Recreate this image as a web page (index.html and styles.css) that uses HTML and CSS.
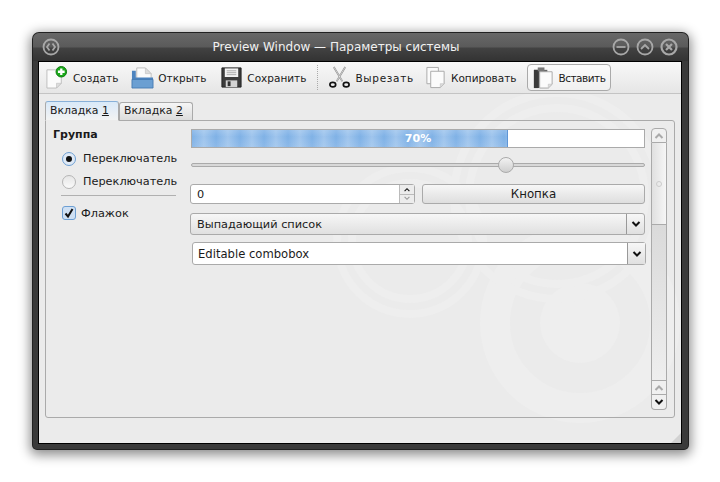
FILE: index.html
```html
<!DOCTYPE html>
<html lang="ru">
<head>
<meta charset="utf-8">
<title>Preview Window</title>
<link rel="stylesheet" href="styles.css">
</head>
<body>
<div class="window">
  <div class="titlebar">
    <svg class="wbtn" viewBox="0 0 18 18"><circle cx="9" cy="9" r="7.500"/><path d="M7.500 5.500 5 9l2.500 3.500M10.500 5.500 13 9l-2.500 3.500"/></svg>
    <div class="title">Preview Window — Параметры системы</div>
    <div class="wbtns">
      <svg class="wbtn" viewBox="0 0 18 18"><circle cx="9" cy="9" r="7.500"/><path d="M4.500 9h9"/></svg>
      <svg class="wbtn" viewBox="0 0 18 18"><circle cx="9" cy="9" r="7.500"/><path d="M5 11l4-4 4 4"/></svg>
      <svg class="wbtn thick" viewBox="0 0 18 18"><circle cx="9" cy="9" r="7.500"/><path d="M6 6l6 6M12 6l-6 6"/></svg>
    </div>
  </div>
  <div class="client">
    <svg class="swirl" viewBox="39 62 642 381">
      <circle class="solid" cx="580" cy="323" r="40"/>
      <circle class="band30" cx="580" cy="323" r="85"/>
      <circle class="band8" cx="557" cy="196" r="103"/>
      <circle class="band8" cx="557" cy="196" r="88"/>
      <circle class="band8" cx="410" cy="241" r="73"/>
      <circle class="band8" cx="410" cy="241" r="58"/>
    </svg>
    <div class="toolbar">
      <div class="tool t-new">
        <svg class="ico" viewBox="0 0 24 24"><path class="paper" d="M2 4h15v14l-5 5H2z"/><path class="fold" d="M17 18h-5v5z"/><circle cx="17" cy="6" r="5.500" fill="#1aa81a" stroke="#0b7a0b"/><path d="M17 2.500v7M13.500 6h7" stroke="#fff" stroke-width="2.400" fill="none"/></svg>
        <span>Создать</span>
      </div>
      <div class="tool t-open">
        <svg class="ico" viewBox="0 0 24 24"><path class="paper" d="M6 2h9l6 6v6H6z"/><path class="fold" d="M15 2v6h6z"/><path d="M1 5h4v7h18v11H1z" fill="#4d84bf"/><path d="M1 14h22v9H1z" fill="#6b9fd2" stroke="#3f74ad" stroke-width=".8"/></svg>
        <span>Открыть</span>
      </div>
      <div class="tool t-save">
        <svg class="ico" viewBox="0 0 24 24"><path d="M2 2h20v20H2z" fill="#3c3c3c" stroke="#222"/><path d="M5 2.500h14v9H5z" fill="#f2f2f2"/><path d="M7 5h10M7 7h10M7 9h10" stroke="#aaa" fill="none"/><path d="M6 15h12v7H6z" fill="#d4d4d4"/><path d="M8 16h3v5H8z" fill="#333"/></svg>
        <span>Сохранить</span>
      </div>
      <div class="tsep"></div>
      <div class="tool t-cut">
        <svg class="ico" viewBox="0 0 24 24"><path d="M6 1l9 15M18 1L9 16" stroke="#888" stroke-width="1.800" fill="none"/><path d="M6 1l9 15M18 1L9 16" stroke="#eee" stroke-width=".7" fill="none"/><ellipse cx="5" cy="19.500" rx="3" ry="2.300" fill="none" stroke="#111" stroke-width="1.800"/><ellipse cx="19" cy="19.500" rx="3" ry="2.300" fill="none" stroke="#111" stroke-width="1.800"/></svg>
        <span>Вырезать</span>
      </div>
      <div class="tool t-copy">
        <svg class="ico" viewBox="0 0 24 24"><path class="paper2" d="M3 1.500h12v17H3z"/><path class="paper2" d="M7 5.500h14v13l-4 4H7z"/><path class="fold" d="M21 18.500h-4v4z"/></svg>
        <span>Копировать</span>
      </div>
      <div class="tool t-paste active">
        <svg class="ico" viewBox="0 0 24 24"><path d="M2 4h14v19H2z" fill="#666"/><path d="M2 4h5v19H2z" fill="#3a3a3a"/><path d="M6 1.500h7v4H6z" fill="#777"/><path class="paper2" d="M8 6h13v13l-4 4H8z"/><path class="fold" d="M21 19h-4v4z"/></svg>
        <span>Вставить</span>
      </div>
    </div>
    <div class="tabs">
      <div class="tab on">Вкладка <u>1</u></div>
      <div class="tab">Вкладка <u>2</u></div>
    </div>
    <div class="pane">
      <div class="side">
        <div class="grouptitle">Группа</div>
        <label class="opt"><span class="radio on"></span>Переключатель</label>
        <label class="opt"><span class="radio"></span>Переключатель</label>
        <div class="hr"></div>
        <label class="chk"><span class="box"><svg viewBox="0 0 12 12"><path d="M2.500 6.500 5 9.500 9.500 2"/></svg></span>Флажок</label>
      </div>
      <div class="main">
        <div class="progress"><div class="fill" style="width:70%"></div><span class="pct">70%</span></div>
        <div class="slider"><div class="groove"></div><div class="handle"></div></div>
        <div class="row">
          <div class="spin"><span class="val">0</span><div class="arrows"><span class="ar"><svg viewBox="0 0 10 6"><path d="M2 5l3-3 3 3"/></svg></span><span class="ar dim"><svg viewBox="0 0 10 6"><path d="M2 1l3 3 3-3"/></svg></span></div></div>
          <div class="btn">Кнопка</div>
        </div>
        <div class="combo"><span class="ctext">Выпадающий список</span><span class="drop"><svg viewBox="0 0 10 6"><path d="M1.500 1 5 4.500 8.500 1"/></svg></span></div>
        <div class="edit"><span class="ctext">Editable combobox</span><span class="drop"><svg viewBox="0 0 10 6"><path d="M1.500 1 5 4.500 8.500 1"/></svg></span></div>
      </div>
      <div class="scroll">
        <div class="sb up"><svg viewBox="0 0 10 6"><path d="M1.500 5 5 1.500 8.500 5"/></svg></div>
        <div class="thumb"><i></i></div>
        <div class="track"></div>
        <div class="sb up"><svg viewBox="0 0 10 6"><path d="M1.500 5 5 1.500 8.500 5"/></svg></div>
        <div class="sb down"><svg viewBox="0 0 10 6"><path d="M1.500 1 5 4.500 8.500 1"/></svg></div>
      </div>
    </div>
    <div class="grip"></div>
  </div>
</div>
</body>
</html>
```
FILE: styles.css
```css
* { box-sizing: border-box; }
html, body { margin: 0; height: 100%; background: #fff; }
body { padding: 33px 32px 0 33px; font: 11.300px "DejaVu Sans", sans-serif; color: #1a1a1a; overflow: hidden; }
svg { display: block; }

.window { width: 655px; height: 416px; background: #3a3a3a; border-radius: 6px 6px 4px 4px; box-shadow: 0 0 0 1px #222, 0 3px 12px 3px rgba(0,0,0,.45); display: flex; flex-direction: column; padding: 0 6px 5px 5px; }
.titlebar { height: 28px; margin: 0 -6px 0 -5px; padding: 0 10px 0 9px; display: flex; align-items: flex-start; border-radius: 6px 6px 0 0; background: linear-gradient(#686868 0, #5a5a5a 14px, #424242 15px, #333 28px); }
.wbtn { width: 18px; height: 18px; margin-top: 5px; fill: none; stroke: #a8a8a8; stroke-width: 1.800; }
.thick { stroke-width: 2.200; }
.title { flex: 1; padding-top: 7px; text-align: center; color: #f1f1f1; font-size: 12px; }
.wbtns { display: flex; gap: 6px; }

.client { position: relative; flex: 1; background: #ebebeb; border: 1px solid #000; display: flex; flex-direction: column; overflow: hidden; }
.swirl { position: absolute; left: 0; top: 0; width: 642px; height: 381px; fill: none; stroke: #eeeeee; }
.solid { fill: #eeeeee; stroke: none; }
.band30 { stroke-width: 30; }
.band8 { stroke-width: 8; }

.toolbar { position: relative; height: 32px; display: flex; align-items: center; padding: 0 0 0 7px; background: linear-gradient(#f8f8f8, #e6e6e6); border-bottom: 1px solid #c4c4c4; font-size: 10.500px; }
.tool { display: flex; align-items: center; gap: 4px; height: 27px; }
.ico { width: 23px; height: 23px; flex: none; }
.paper { fill: #fbfbfb; stroke: #bdbdbd; }
.paper2 { fill: #fbfbfb; stroke: #a9a9a9; }
.fold { fill: #ddd; stroke: #bdbdbd; stroke-width: .6; }
.t-new { margin-left: -1px; gap: 5px; }
.t-open { margin-left: 13px; }
.t-save { margin-left: 14px; }
.tsep { width: 0; height: 25px; margin-left: 11px; border-left: 1px dotted #aaa; }
.t-cut { margin-left: 10px; }
.t-cut span { letter-spacing: .7px; }
.t-copy { margin-left: 10px; }
.t-paste { margin-left: 10px; }
.t-paste span { letter-spacing: -.5px; }
.active { padding: 0 5px 0 4px; background: linear-gradient(#fbfbfb, #f0f0f0); border: 1px solid #aaa; border-radius: 4px; }

.tabs { position: relative; display: flex; align-items: flex-end; height: 26px; padding-left: 6px; font-size: 10.900px; }
.tab { width: 74px; height: 18px; padding: 1px 0 0 4px; border: 1px solid #aaa; border-bottom: 0; border-radius: 3px 3px 0 0; background: linear-gradient(#f6f6f6, #dcdcdc); }
.tab.on { height: 20px; padding-top: 2px; background: linear-gradient(#d9e9f8, #f3f3f3); border-bottom: 1px solid #ebebeb; margin-bottom: -1px; z-index: 1; border-top-color: #88b0d8; }

.pane { position: relative; width: 630px; height: 298px; margin-left: 6px; border: 1px solid #aaa; border-radius: 0 3px 3px 3px; display: flex; padding: 7px; }
.side { width: 137px; flex: none; display: flex; flex-direction: column; }
.grouptitle { font-weight: bold; line-height: 14px; height: 14px; font-size: 11px; }
.opt { display: flex; align-items: center; gap: 7px; height: 23px; padding-left: 9px; }
.grouptitle + .opt { margin-top: 5px; }
.radio { width: 14px; height: 14px; border-radius: 50%; border: 1px solid #b5b5b5; background: linear-gradient(#e6e6e6, #fafafa); flex: none; display: flex; align-items: center; justify-content: center; }
.radio.on { border-color: #6d9fd3; background: #dfe9f5; }
.radio.on::after { content: ""; width: 6px; height: 6px; border-radius: 50%; background: #111; }
.hr { height: 1px; background: #b0b0b0; margin: 2px 0 0 8px; width: 115px; }
.chk { display: flex; align-items: center; gap: 5px; margin: 10px 0 0 9px; height: 14px; }
.box { width: 14px; height: 14px; flex: none; border: 1px solid #6d9fd3; border-radius: 3px; background: #cfe0f3; }
.box svg { width: 12px; height: 12px; fill: none; stroke: #111; stroke-width: 2; }

.main { width: 457px; flex: none; padding-top: 1px; display: flex; flex-direction: column; }
.progress { position: relative; width: 454px; height: 19px; margin-left: 1px; border: 1px solid #aaa; background: #fff; }
.fill { height: 100%; border-right: 1px solid #5f96d6; background: linear-gradient(rgba(255,255,255,.15), rgba(255,255,255,0) 40%, rgba(255,255,255,.1)), repeating-linear-gradient(90deg, #7fb1e6 0, #9fc5ed 12px, #7fb1e6 24px); }
.pct { position: absolute; inset: 0; text-align: center; line-height: 18px; color: #fff; font-weight: bold; font-size: 11px; }
.slider { position: relative; height: 17px; margin-top: 8px; width: 454px; margin-left: 1px; }
.groove { position: absolute; left: 0; right: 0; top: 7px; height: 4px; border: 1px solid #aaa; border-radius: 2px; background: #d8d8d8; }
.handle { position: absolute; left: 307px; top: 1px; width: 16px; height: 16px; border-radius: 50%; border: 1px solid #aaa; background: linear-gradient(#f2f2f2, #cfcfcf); }
.row { display: flex; gap: 7px; margin-top: 11px; height: 20px; }
.spin { width: 225px; display: flex; align-items: center; justify-content: space-between; padding-left: 6px; background: #fff; border: 1px solid #aaa; border-radius: 3px; }
.arrows { width: 15px; height: 100%; display: flex; flex-direction: column; background: #ececec; border-left: 1px solid #bbb; }
.ar { flex: 1; display: flex; align-items: center; justify-content: center; border-bottom: 1px solid #bbb; }
.ar svg { width: 8px; height: 5px; fill: none; stroke: #111; stroke-width: 1.400; }
.ar.dim { border-bottom: 0; }
.ar.dim svg { stroke: #999; }
.btn { width: 223px; text-align: center; line-height: 18px; border: 1px solid #aaa; border-radius: 3px; background: linear-gradient(#f7f7f7, #dedede); font-size: 11.800px; }
.combo, .edit { display: flex; align-items: center; border: 1px solid #aaa; border-radius: 3px; }
.combo { margin-top: 9px; height: 22px; width: 455px; background: linear-gradient(#f7f7f7, #e0e0e0); }
.edit { margin-top: 7px; height: 23px; width: 454px; margin-left: 2px; background: #fff; font-size: 11.600px; }
.ctext { flex: 1; padding-left: 5px; }
.combo .ctext { padding-left: 6px; }
.drop { width: 18px; height: 100%; display: flex; align-items: center; justify-content: center; border-left: 1px solid #999; }
.edit .drop { background: linear-gradient(#f7f7f7, #e0e0e0); }
.drop svg { width: 10px; height: 6px; fill: none; stroke: #111; stroke-width: 2; }

.scroll { width: 16px; flex: none; margin-left: 4px; height: 282px; display: flex; flex-direction: column; }
.sb { height: 15px; display: flex; align-items: center; justify-content: center; border: 1px solid #aaa; background: #f0f0f0; }
.sb:first-child { border-radius: 4px 4px 0 0; }
.sb:last-child { border-radius: 0 0 4px 4px; border-top: 0; }
.sb svg { width: 10px; height: 6px; fill: none; stroke: #111; stroke-width: 2; }
.sb.up svg { stroke: #aaa; }
.thumb { height: 82px; border: 1px solid #aaa; border-top: 0; background: linear-gradient(90deg, #e0e0e0, #f6f6f6); display: flex; align-items: center; justify-content: center; }
.thumb i { width: 6px; height: 6px; border: 1px solid #ccc; border-radius: 50%; }
.track { flex: 1; border: 1px solid #aaa; border-width: 0 1px; background: linear-gradient(#dadada, #eee); }
.sb + .sb { border-top: 0; }
.track + .sb { border-top: 1px solid #aaa; }

.grip { position: absolute; right: 0; bottom: 0; width: 0; height: 0; border-left: 10px solid transparent; border-bottom: 10px solid #d2d2d2; }
```
